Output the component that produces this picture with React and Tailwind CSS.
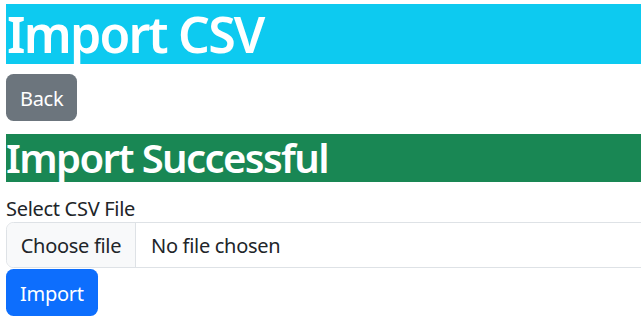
import React from 'react';

const App = () => {
  return (
    <div className="w-[641px] h-[318px] overflow-hidden bg-white" style={{ fontFamily: '"Noto Sans", "Open Sans", sans-serif' }}>
      <div className="pl-[6px] pt-[4px] w-[660px] text-[20px] leading-[30px] tracking-[-0.3px] text-[#212529]">
        {/* Page title */}
        <h1 className="bg-[#0dcaf0] text-white text-[50px] leading-[60px] font-semibold tracking-[-1.8px] pl-[1px] mb-[10px]">Import CSV</h1>
        <button className="bg-[#6c757d] text-white rounded-[7.5px] px-[14px] h-[47px] text-[20px] leading-[30px] pt-[2px] mb-[13px]">
          Back
        </button>

        {/* Status banner */}
        <h2 className="bg-[#198754] text-white text-[40px] leading-[48px] font-semibold tracking-[-1.6px] mb-[10px]">Import Successful</h2>

        <form onSubmit={(e) => e.preventDefault()}>
          <label className="block h-[30px] pt-[2px]">Select CSV File</label>
          <div className="flex h-[46px] border border-[#dee2e6] rounded-[7.5px] overflow-hidden">
            <span className="flex items-center justify-center whitespace-nowrap bg-[#f8f9fa] border-r border-[#dee2e6] w-[129px] pt-[2px]">Choose file</span>
            <span className="flex items-center whitespace-nowrap pl-[15px] pt-[2px]">No file chosen</span>
          </div>
          <button type="submit" className="mt-px bg-[#0d6efd] text-white rounded-[7.5px] px-[14px] h-[47px] text-[20px] leading-[30px] pt-[2px]">
            Import
          </button>
        </form>
      </div>
    </div>
  );
};

export default App;
